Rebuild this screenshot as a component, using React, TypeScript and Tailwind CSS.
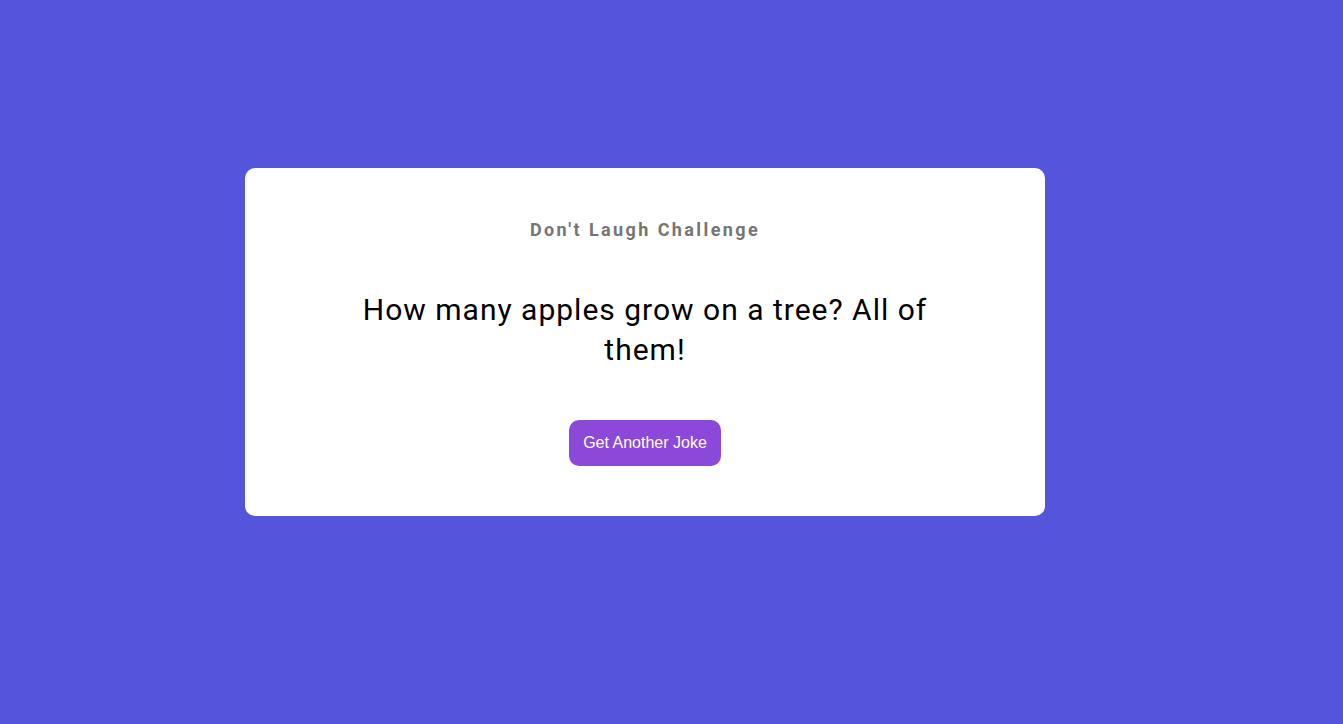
export default function App() {
  return (
    <div className="min-h-screen w-full bg-[#5555dc] flex items-center justify-center pr-[53px] pb-[40px]" style={{ fontFamily: "Roboto, sans-serif" }}>
      <div className="w-[800px] bg-white rounded-[10px] flex flex-col items-center pt-[48px] pb-[50px]">
        <h1 className="text-[18px] leading-[27px] font-bold tracking-[2.4px] text-[#757575] font-['Roboto',sans-serif]">
          Don't Laugh Challenge
        </h1>
        <p className="mt-[47px] w-[600px] text-center text-[30px] leading-[40px] tracking-[1px] text-black font-['Roboto',sans-serif]">
          How many apples grow on a tree? All of them!
        </p>
        <button className="mt-[50px] h-[46px] px-[14px] rounded-[10px] bg-[#8c48d8] text-white text-[16px] font-['Liberation_Sans',Arial,sans-serif]">
          Get Another Joke
        </button>
      </div>
    </div>
  );
}
